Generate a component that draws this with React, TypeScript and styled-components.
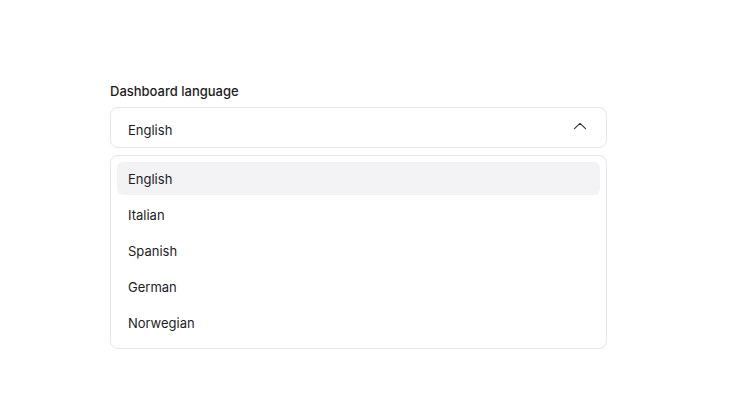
import styled, { createGlobalStyle } from 'styled-components';

const GlobalStyle = createGlobalStyle`
  body {
    margin: 0;
    background: #ffffff;
    font-family: Inter, "Noto Sans", sans-serif;
    color: #1c1c1e;
  }
`;

const languages = ['English', 'Italian', 'Spanish', 'German', 'Norwegian'];

export default function App(): JSX.Element {
  const selected = 'English';

  return (
    <>
      <GlobalStyle />
      <Page>
        <Field>
          <Label>Dashboard language</Label>
          <Trigger>
            <span>{selected}</span>
            <svg width="14" height="14" viewBox="0 0 24 24" fill="none" stroke="#2a2a2c" strokeWidth="1.8" strokeLinecap="round" strokeLinejoin="round">
              <path d="M2.5 16.5l9.5-9 9.5 9" />
            </svg>
          </Trigger>
          <Menu>
            {languages.map((lang) => (
              <Option key={lang} $active={lang === selected}>
                {lang}
              </Option>
            ))}
          </Menu>
        </Field>
      </Page>
    </>
  );
}

const Page = styled.div`
  padding: 83px 0 0 110px;
`;

const Field = styled.div`
  width: 497px;
  display: flex;
  flex-direction: column;
`;

const Label = styled.div`
  font-size: 13px;
  font-weight: 500;
  line-height: 17px;
  margin-bottom: 7px;
`;

const Trigger = styled.div`
  height: 41px;
  box-sizing: border-box;
  border: 1px solid #e6e6e8;
  border-radius: 8px;
  display: flex;
  align-items: center;
  justify-content: space-between;
  padding: 4px 19px 0 17px;
  font-size: 13px;

  svg {
    margin-top: -7px;
  }
`;

const Menu = styled.div`
  margin-top: 7px;
  border: 1px solid #e6e6e8;
  border-radius: 8px;
  padding: 6px 6px 9px;
  display: flex;
  flex-direction: column;
  gap: 3px;
`;

const Option = styled.div<{ $active: boolean }>`
  height: 33px;
  box-sizing: border-box;
  display: flex;
  align-items: center;
  padding: 1px 11px 0;
  border-radius: 6px;
  font-size: 13px;
  background: ${({ $active }) => ($active ? '#f3f3f5' : 'transparent')};
`;
